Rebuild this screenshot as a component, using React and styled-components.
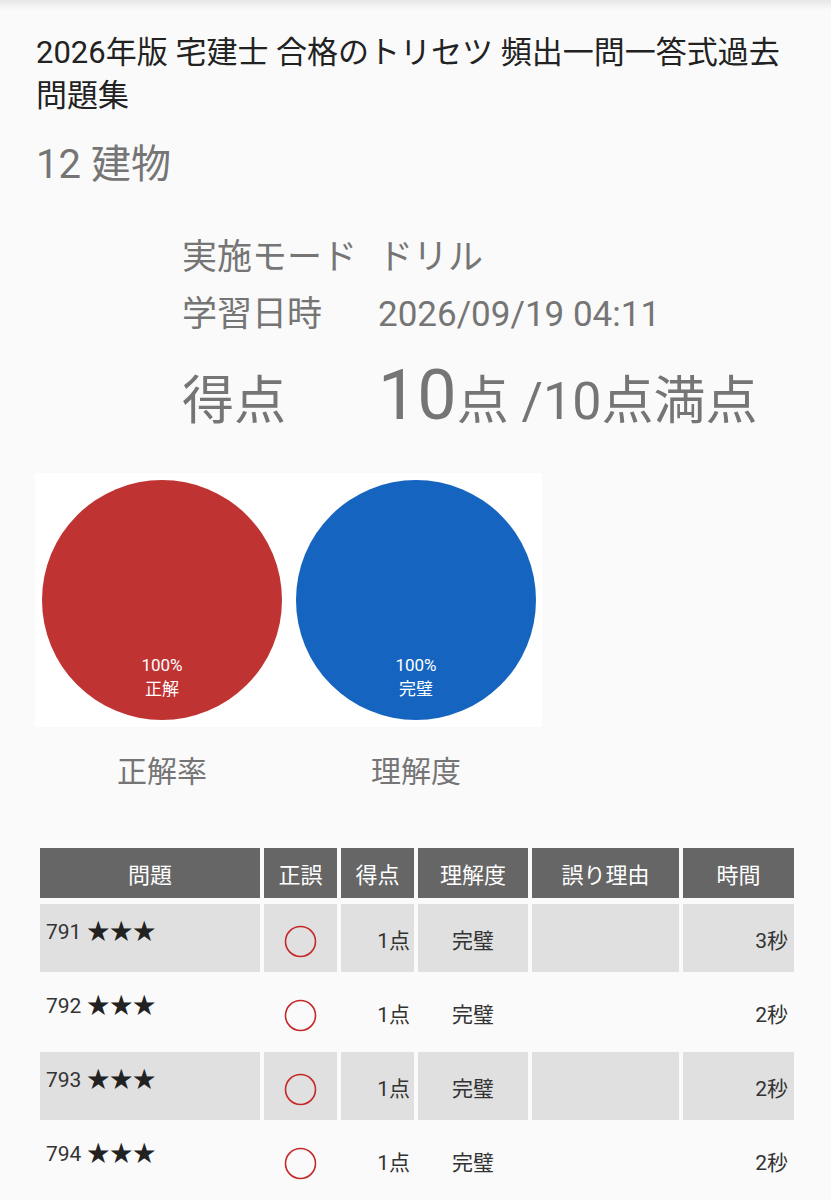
import styled, { createGlobalStyle } from 'styled-components';

const GlobalStyle = createGlobalStyle`
  html, body {
    margin: 0;
    padding: 0;
  }
  body {
    background: linear-gradient(#e6e6e6 0, #fafafa 10px) no-repeat, #fafafa;
    font-family: Roboto, "Noto Sans CJK JP", sans-serif;
    color: #222;
  }
`;

const Page = styled.main`
  padding: 31px 31px 0 36px;
  width: 831px;
  box-sizing: border-box;
`;

const BookTitle = styled.h1`
  margin: 0;
  font-size: 31px;
  line-height: 43px;
  font-weight: 400;
  color: #222;
`;

const Chapter = styled.h2`
  margin: 22px 0 0;
  font-size: 40px;
  line-height: 52px;
  font-weight: 400;
  color: #757575;
`;

const Info = styled.div`
  margin: 38px 0 0 146px;
  display: grid;
  grid-template-columns: 196px auto;
  color: #757575;
  align-items: baseline;
`;

const InfoLabel = styled.div`
  font-size: ${({ $big }) => ($big ? '52px' : '35px')};
  line-height: ${({ $big }) => ($big ? '104px' : '57px')};
  white-space: nowrap;
`;

const InfoValue = styled.div`
  font-size: ${({ $big }) => ($big ? '52px' : '35px')};
  line-height: ${({ $big }) => ($big ? '104px' : '57px')};
  white-space: nowrap;
`;

const BigNumber = styled.span`
  font-size: 70px;
`;

const ChartPanel = styled.div`
  margin: 19px 0 0 -1px;
  width: 507px;
  box-sizing: border-box;
  padding: 7px 6px 7px 7px;
  background: #fff;
  display: flex;
  gap: 14px;
`;

const Pie = styled.div`
  width: 240px;
  height: 240px;
  border-radius: 50%;
  background: ${({ $color }) => $color};
  display: flex;
  flex-direction: column;
  justify-content: flex-end;
  align-items: center;
  padding-bottom: 19px;
  box-sizing: border-box;
  color: #fff;
  font-size: 17px;
  line-height: 24px;
`;

const ChartLabels = styled.div`
  margin-left: -1px;
  margin-top: 25px;
  display: grid;
  grid-template-columns: 254px 254px;
`;

const ChartLabel = styled.div`
  text-align: center;
  font-size: 30px;
  line-height: 40px;
  color: #757575;
`;

const Table = styled.table`
  margin-top: 50px;
  border-collapse: separate;
  border-spacing: 4px 6px;
  width: 762px;
  table-layout: fixed;
`;

const Th = styled.th`
  height: 50px;
  padding: 0;
  background: #666;
  color: #fff;
  font-size: 22px;
  font-weight: 400;
  text-align: center;
  vertical-align: middle;
`;

const Row = styled.tr`
  background: transparent;
`;

const Td = styled.td`
  height: 68px;
  padding: ${({ $top }) => ($top ? '14px 6px 0' : '6px 6px 0')};
  box-sizing: border-box;
  background: ${({ $shade }) => ($shade ? '#e0e0e0' : 'transparent')};
  font-size: 21px;
  line-height: 28px;
  color: #333;
  text-align: ${({ $align }) => $align || 'left'};
  vertical-align: ${({ $top }) => ($top ? 'top' : 'middle')};
  white-space: nowrap;
`;

const ScoreTd = styled(Td)`
  padding-right: 4px;
`;

const Stars = styled.span`
  font-size: 23px;
  color: #222;
`;

const Mark = styled.svg`
  display: block;
  margin: 0 auto;
`;

const CorrectMark = () => (
  <Mark width="33" height="33" viewBox="0 0 33 33">
    <circle cx="16.5" cy="16.5" r="15" fill="none" stroke="#c62828" strokeWidth="1.6" />
  </Mark>
);

const rows = [
  { no: 791, time: '3秒' },
  { no: 792, time: '2秒' },
  { no: 793, time: '2秒' },
  { no: 794, time: '2秒' },
];

const App = () => {
  return (
    <>
      <GlobalStyle />
      <Page>
        <BookTitle>2026年版 宅建士 合格のトリセツ 頻出一問一答式過去問題集</BookTitle>
        <Chapter>12 建物</Chapter>
        <Info>
          <InfoLabel>実施モード</InfoLabel>
          <InfoValue>ドリル</InfoValue>
          <InfoLabel>学習日時</InfoLabel>
          <InfoValue>2026/09/19 04:11</InfoValue>
          <InfoLabel $big>得点</InfoLabel>
          <InfoValue $big>
            <BigNumber>10</BigNumber>点 /10点満点
          </InfoValue>
        </Info>
        <ChartPanel>
          <Pie $color="#c03333">
            <span>100%</span>
            <span>正解</span>
          </Pie>
          <Pie $color="#1565c0">
            <span>100%</span>
            <span>完璧</span>
          </Pie>
        </ChartPanel>
        <ChartLabels>
          <ChartLabel>正解率</ChartLabel>
          <ChartLabel>理解度</ChartLabel>
        </ChartLabels>
        <Table>
          <colgroup>
            <col style={{ width: 220 }} />
            <col style={{ width: 73 }} />
            <col style={{ width: 73 }} />
            <col style={{ width: 110 }} />
            <col style={{ width: 147 }} />
            <col style={{ width: 111 }} />
          </colgroup>
          <thead>
            <tr>
              <Th>問題</Th>
              <Th>正誤</Th>
              <Th>得点</Th>
              <Th>理解度</Th>
              <Th>誤り理由</Th>
              <Th>時間</Th>
            </tr>
          </thead>
          <tbody>
            {rows.map((r, i) => {
              const shade = i % 2 === 0;
              return (
                <Row key={r.no}>
                  <Td $shade={shade} $top>
                    {r.no} <Stars>★★★</Stars>
                  </Td>
                  <Td $shade={shade} $align="center">
                    <CorrectMark />
                  </Td>
                  <ScoreTd $shade={shade} $align="right">
                    1点
                  </ScoreTd>
                  <Td $shade={shade} $align="center">
                    完璧
                  </Td>
                  <Td $shade={shade} />
                  <Td $shade={shade} $align="right">
                    {r.time}
                  </Td>
                </Row>
              );
            })}
          </tbody>
        </Table>
      </Page>
    </>
  );
};

export default App;
